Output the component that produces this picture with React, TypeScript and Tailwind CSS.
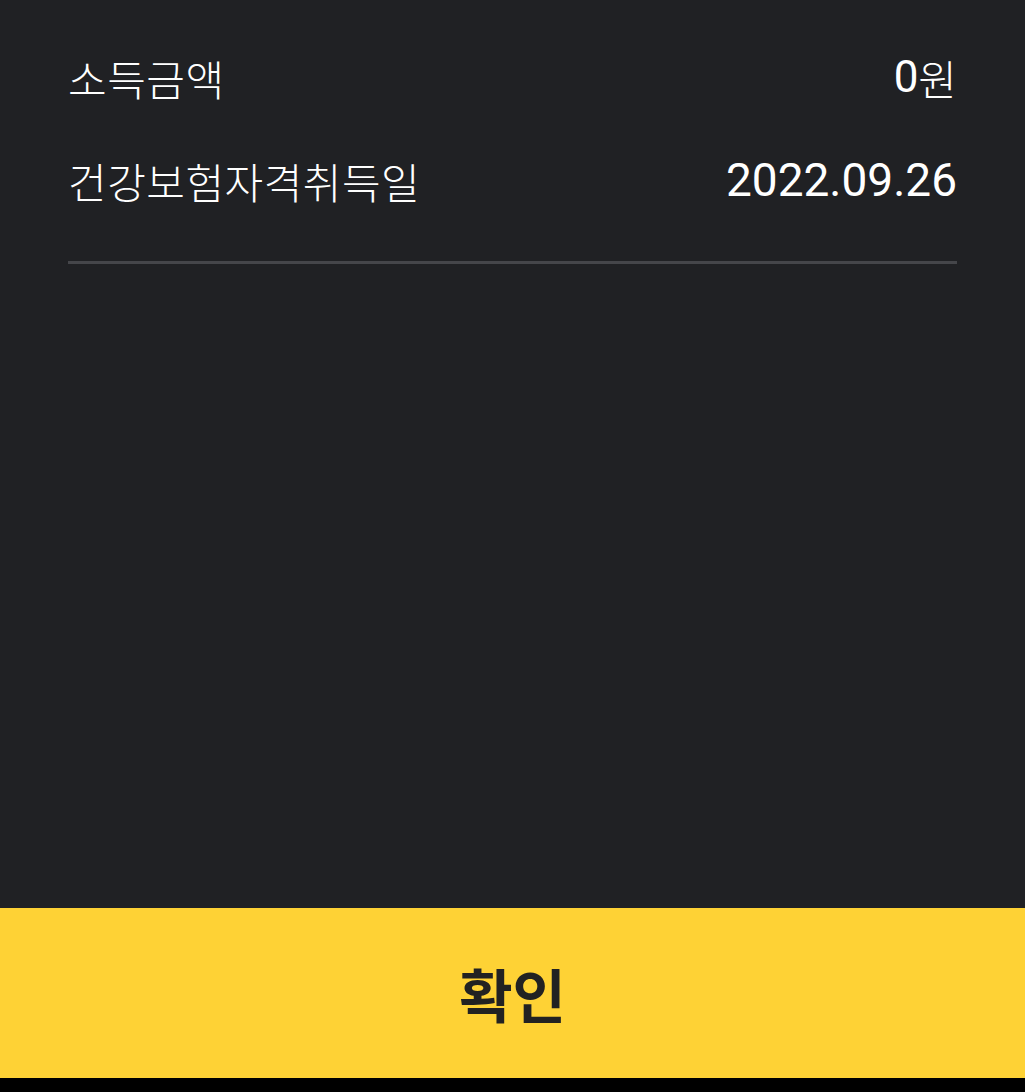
export default function App() {
  return (
    <div className="w-[1025px] h-[1092px] bg-[#202124] flex flex-col" style={{ fontFamily: 'Roboto, "Noto Sans CJK KR", sans-serif' }}>
      <div className="flex-1 px-[68px] pt-[50px]">
        <div className="flex justify-between items-center h-[54px] text-white">
          <span className="text-[42px] tracking-[0.5px] font-light" style={{ fontFamily: '"Noto Sans CJK KR", sans-serif' }}>소득금액</span>
          <span className="text-[44px] flex items-center"><span>0</span><span className="text-[42px] font-light" style={{ fontFamily: '"Noto Sans CJK KR", sans-serif' }}>원</span></span>
        </div>
        <div className="flex justify-between items-center h-[54px] mt-[49px] text-white">
          <span className="text-[42px] tracking-[0.5px] font-light" style={{ fontFamily: '"Noto Sans CJK KR", sans-serif' }}>건강보험자격취득일</span>
          <span className="text-[46px]">2022.09.26</span>
        </div>
        <div className="mt-[54px] h-[3px] bg-[#45464a]" />
      </div>
      <div className="h-[170px] bg-[#fed235] flex items-center justify-center">
        <span className="text-[58px] font-bold text-[#222222]" style={{ fontFamily: '"Noto Sans CJK KR", sans-serif' }}>확인</span>
      </div>
      <div className="h-[14px] bg-black" />
    </div>
  );
}
